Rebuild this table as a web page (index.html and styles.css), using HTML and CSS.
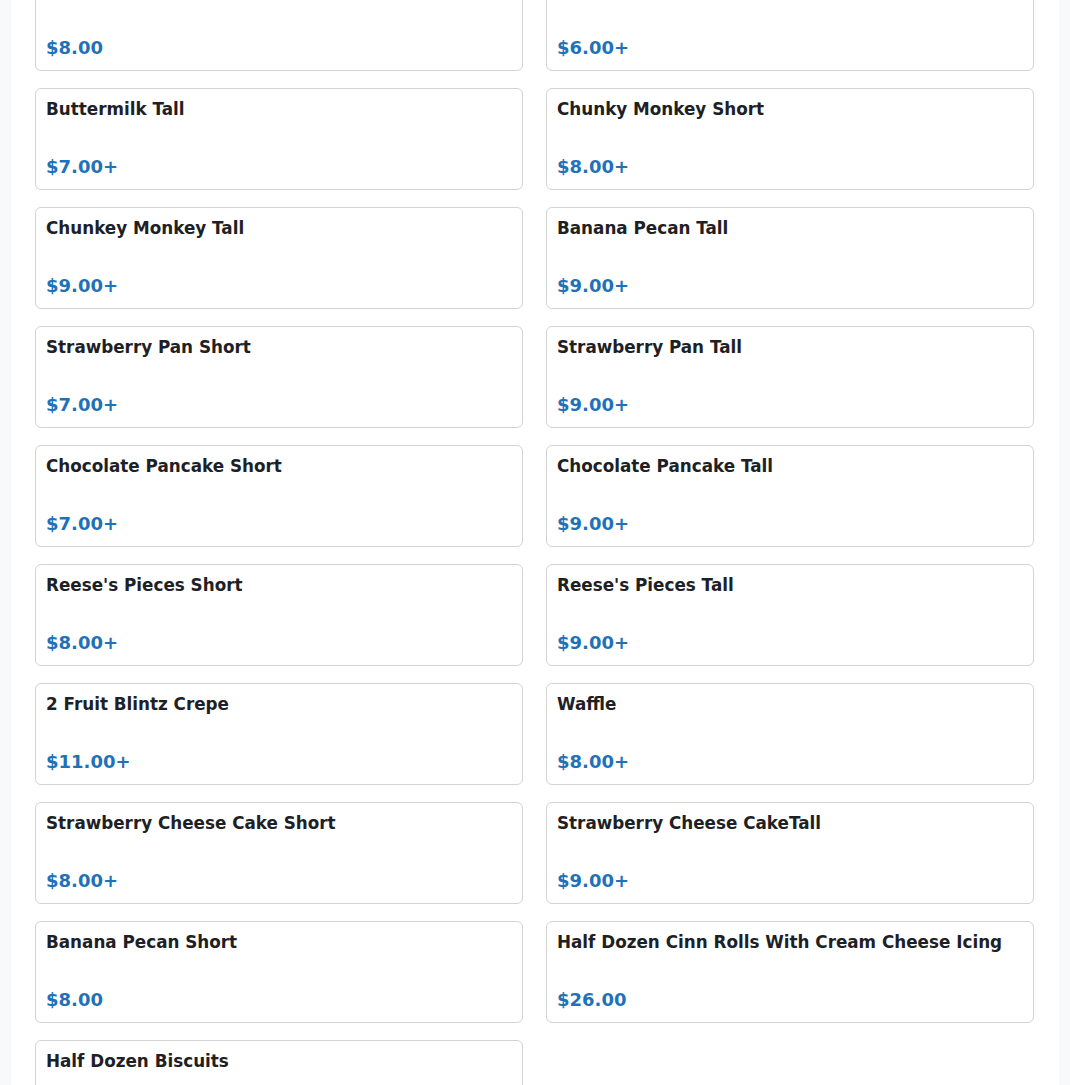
FILE: index.html
```html
<!DOCTYPE html>
<html lang="en">
<head>
<meta charset="utf-8">
<title>Menu</title>
<link rel="stylesheet" href="styles.css">
</head>
<body>
<main class="page">
  <div class="grid">
    <div class="card"><div class="name">Large Cinnamon Roll With Icing</div><div class="price">$8.00</div></div>
    <div class="card"><div class="name">Buttermilk Short</div><div class="price">$6.00+</div></div>
    <div class="card"><div class="name">Buttermilk Tall</div><div class="price">$7.00+</div></div>
    <div class="card"><div class="name">Chunky Monkey Short</div><div class="price">$8.00+</div></div>
    <div class="card"><div class="name">Chunkey Monkey Tall</div><div class="price">$9.00+</div></div>
    <div class="card"><div class="name">Banana Pecan Tall</div><div class="price">$9.00+</div></div>
    <div class="card"><div class="name">Strawberry Pan Short</div><div class="price">$7.00+</div></div>
    <div class="card"><div class="name">Strawberry Pan Tall</div><div class="price">$9.00+</div></div>
    <div class="card"><div class="name">Chocolate Pancake Short</div><div class="price">$7.00+</div></div>
    <div class="card"><div class="name">Chocolate Pancake Tall</div><div class="price">$9.00+</div></div>
    <div class="card"><div class="name">Reese's Pieces Short</div><div class="price">$8.00+</div></div>
    <div class="card"><div class="name">Reese's Pieces Tall</div><div class="price">$9.00+</div></div>
    <div class="card"><div class="name">2 Fruit Blintz Crepe</div><div class="price">$11.00+</div></div>
    <div class="card"><div class="name">Waffle</div><div class="price">$8.00+</div></div>
    <div class="card"><div class="name">Strawberry Cheese Cake Short</div><div class="price">$8.00+</div></div>
    <div class="card"><div class="name">Strawberry Cheese CakeTall</div><div class="price">$9.00+</div></div>
    <div class="card"><div class="name">Banana Pecan Short</div><div class="price">$8.00</div></div>
    <div class="card"><div class="name">Half Dozen Cinn Rolls With Cream Cheese Icing</div><div class="price">$26.00</div></div>
    <div class="card"><div class="name">Half Dozen Biscuits</div><div class="price">$12.00</div></div>
  </div>
</main>
</body>
</html>
```

FILE: styles.css
```css
html, body {
  margin: 0;
  padding: 0;
  background: #f8f9fa;
  font-family: "DejaVu Sans", sans-serif;
  color: #212529;
}

.page {
  margin: 0 11px;
  background: #ffffff;
  padding: 0 25px 40px 24px;
  min-height: 1085px;
  box-sizing: border-box;
}

.grid {
  display: grid;
  grid-template-columns: 1fr 1fr;
  column-gap: 23px;
  row-gap: 17px;
  transform: translateY(-31px);
}

.card {
  border: 1px solid #d3d3d3;
  border-radius: 6px;
  padding: 11px 10px 11px;
  height: 102px;
  box-sizing: border-box;
  display: flex;
  flex-direction: column;
  justify-content: space-between;
}

.name {
  font-size: 16.8px;
  font-weight: bold;
  line-height: 19px;
  color: #1d2125;
}

.price {
  font-size: 18px;
  font-weight: bold;
  line-height: 22px;
  color: #1f72b8;
}
```
